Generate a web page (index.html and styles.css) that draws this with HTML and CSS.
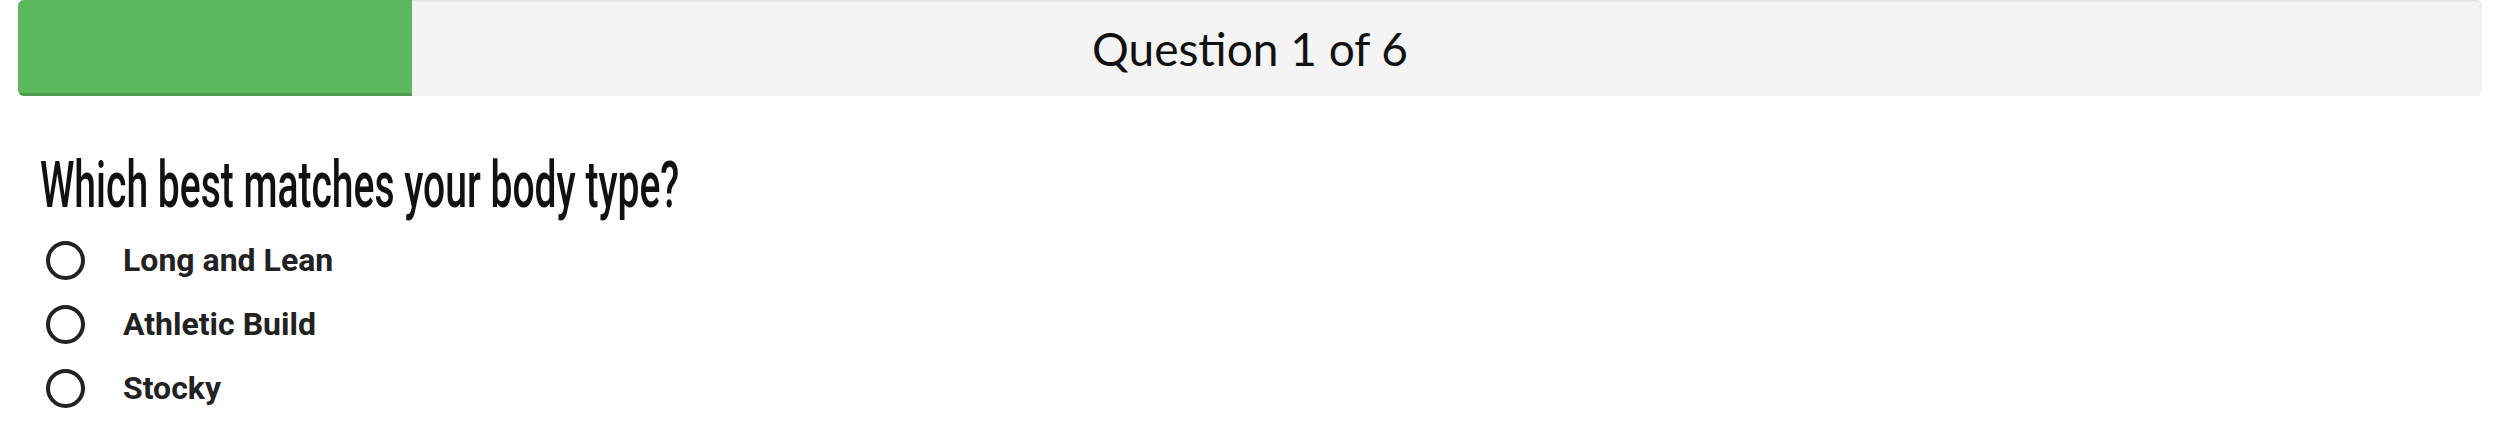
FILE: index.html
```html
<!DOCTYPE html>
<html>
<head>
<meta charset="utf-8">
<link rel="stylesheet" href="styles.css">
</head>
<body>
<div class="quiz">
  <div class="progress">
    <div class="progress-bar" style="width: 16%"></div>
    <div class="progress-label">Question 1 of 6</div>
  </div>
  <div class="question">
    <h2 class="question-title"><span class="title-text">Which best matches your body type?</span></h2>
    <ul class="options">
      <li class="option"><span class="radio"></span><span class="option-label">Long and Lean</span></li>
      <li class="option"><span class="radio"></span><span class="option-label">Athletic Build</span></li>
      <li class="option"><span class="radio"></span><span class="option-label">Stocky</span></li>
    </ul>
  </div>
</div>
</body>
</html>
```
FILE: styles.css
```css
html, body {
  margin: 0;
  padding: 0;
  background: #fff;
}
.quiz {
  padding: 0 20px 0 18px;
}
.progress {
  position: relative;
  height: 96px;
  background: #f4f4f4;
  border-radius: 6px;
  box-shadow: inset 0 1px 2px rgba(0,0,0,0.1);
  overflow: hidden;
  display: flex;
}
.progress-bar {
  height: 100%;
  background: #5cb85c;
  box-shadow: inset 0 -3px 0 rgba(0,0,0,0.15);
}
.progress-label {
  position: absolute;
  inset: 0;
  display: flex;
  align-items: center;
  justify-content: center;
  font-family: Lato, "Open Sans", sans-serif;
  font-size: 46px;
  color: #111;
}
.question {
  padding-left: 17px;
}
.question-title {
  margin: 0;
  padding-top: 58px;
  height: 74px;
  font-family: Roboto, sans-serif;
  font-weight: 500;
  font-size: 64px;
  line-height: 64px;
  color: #111;
  white-space: nowrap;
}
.title-text {
  display: inline-block;
  margin-left: 5px;
  transform: scaleX(0.61);
  transform-origin: left center;
}
.options {
  list-style: none;
  margin: 0;
  padding: 0 0 0 11px;
}
.option {
  display: flex;
  align-items: center;
  height: 64px;
}
.radio {
  box-sizing: border-box;
  width: 39px;
  height: 39px;
  border: 4px solid #222;
  border-radius: 50%;
}
.option-label {
  margin-left: 38px;
  font-family: Roboto, sans-serif;
  font-weight: 700;
  font-size: 32px;
  color: #222;
}
```
